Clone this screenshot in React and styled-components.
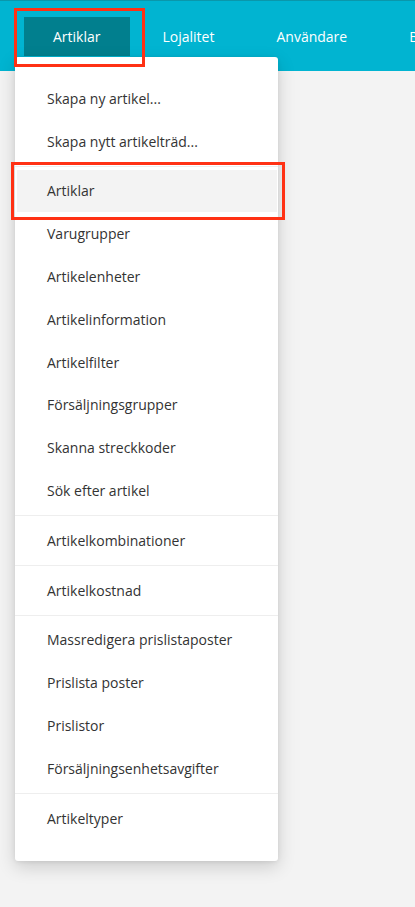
import React from 'react';
import styled, { createGlobalStyle, css } from 'styled-components';

const GlobalStyle = createGlobalStyle`
  html, body {
    margin: 0;
    padding: 0;
    background: #f3f3f3;
    font-family: "Open Sans", "Noto Sans", Arial, sans-serif;
    overflow: hidden;
  }
`;

const Page = styled.div`
  position: relative;
  width: 415px;
  height: 907px;
  background: #f3f3f3;
`;

const Header = styled.header`
  height: 70px;
  background: #01b4d1;
  border-top: 1px solid #0a97ab;
  display: flex;
  align-items: center;
  padding-left: 24px;
  gap: 4px;
  overflow: hidden;
  white-space: nowrap;
`;

// red annotation frame drawn around a marked element
const marked = css`
  &::after {
    content: '';
    position: absolute;
    top: ${(p) => p.$frame[0]}px;
    right: ${(p) => p.$frame[1]}px;
    bottom: ${(p) => p.$frame[2]}px;
    left: ${(p) => p.$frame[3]}px;
    border: 3px solid #ff3114;
    pointer-events: none;
    z-index: 5;
  }
`;

const Tab = styled.div`
  position: relative;
  height: 39px;
  padding: 0 29px;
  display: flex;
  align-items: center;
  flex-shrink: 0;
  font-size: 14px;
  color: #ffffff;
  background: ${(p) => (p.$active ? '#017f8e' : 'transparent')};
  ${(p) => p.$frame && marked}
`;

const Menu = styled.div`
  position: absolute;
  top: 57px;
  left: 15px;
  width: 263px;
  padding: 20px 0 21px;
  background: #ffffff;
  border-radius: 3px;
  box-shadow: 0 6px 18px rgba(0, 0, 0, 0.16), 0 1px 4px rgba(0, 0, 0, 0.08);
  z-index: 2;
`;

const Item = styled.div`
  position: relative;
  height: 42.8px;
  margin: 0 1px 0 2px;
  padding-left: 30px;
  display: flex;
  align-items: center;
  font-size: 14px;
  color: #333333;
  background: ${(p) => (p.$selected ? '#f3f3f3' : 'transparent')};
  ${(p) => p.$frame && marked}
`;

const Divider = styled.div`
  height: 1px;
  margin: 3px 0;
  background: #eeeeee;
`;

const groups = [
  ['Skapa ny artikel...', 'Skapa nytt artikelträd...'],
  [
    'Artiklar',
    'Varugrupper',
    'Artikelenheter',
    'Artikelinformation',
    'Artikelfilter',
    'Försäljningsgrupper',
    'Skanna streckkoder',
    'Sök efter artikel',
  ],
  ['Artikelkombinationer'],
  ['Artikelkostnad'],
  [
    'Massredigera prislistaposter',
    'Prislista poster',
    'Prislistor',
    'Försäljningsenhetsavgifter',
  ],
  ['Artikeltyper'],
];

const tabs = ['Artiklar', 'Lojalitet', 'Användare', 'Butiker'];

export default function App() {
  return (
    <Page>
      <GlobalStyle />
      <Header>
        {tabs.map((t, i) => (
          <Tab key={t} $active={i === 0} $frame={i === 0 ? [-9, -15, -11, -10] : null}>
            {t}
          </Tab>
        ))}
      </Header>
      <Menu>
        {groups.map((g, gi) => (
          <React.Fragment key={gi}>
            {gi > 0 && <Divider />}
            {g.map((label) => {
              const sel = label === 'Artiklar';
              return (
                <Item key={label} $selected={sel} $frame={sel ? [-8, -8, -8, -6] : null}>
                  {label}
                </Item>
              );
            })}
          </React.Fragment>
        ))}
      </Menu>
    </Page>
  );
}
